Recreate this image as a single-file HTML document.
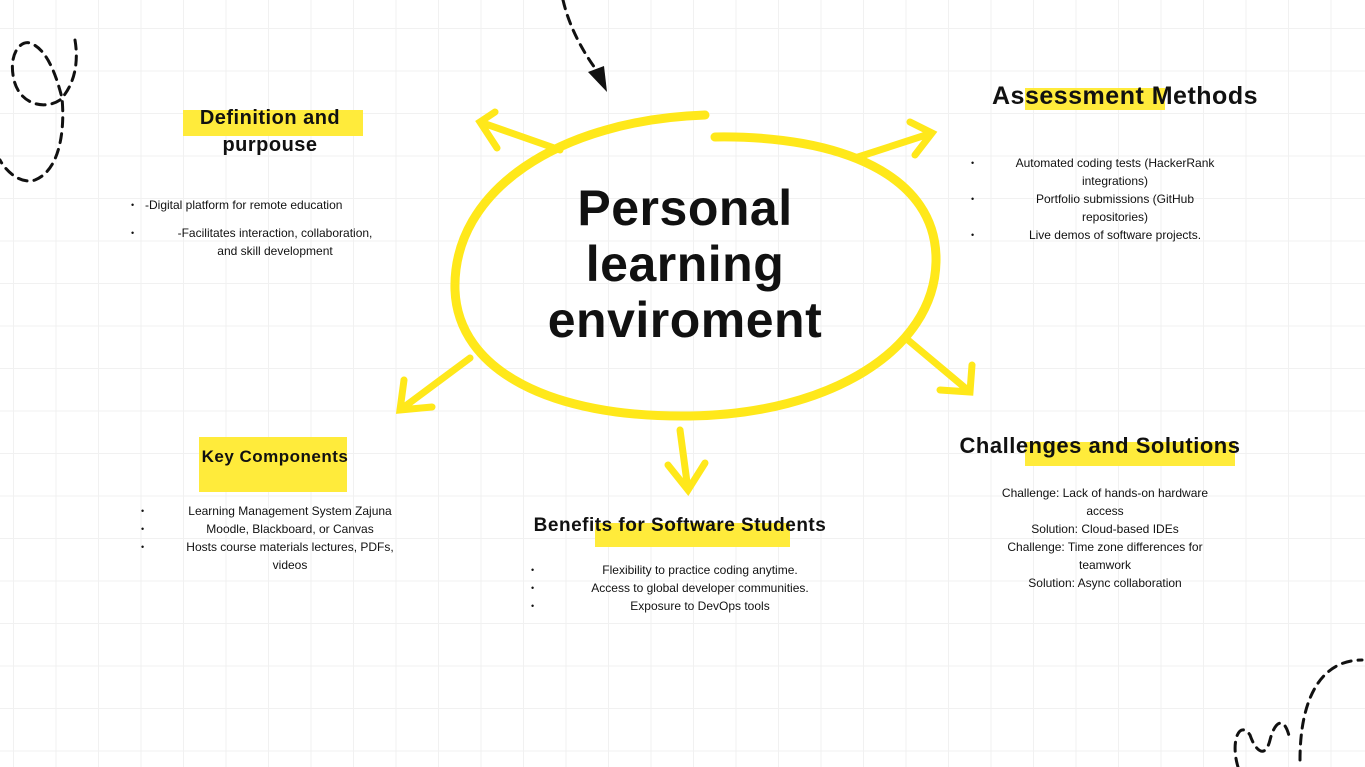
<!DOCTYPE html>
<html><head><meta charset="utf-8"><style>
html,body{margin:0;padding:0}
body{width:1365px;height:767px;position:relative;overflow:hidden;background:#fff;
background-image:linear-gradient(#f1f1f1 1px,transparent 1px),linear-gradient(90deg,#f1f1f1 1px,transparent 1px);
background-size:42.5px 42.5px;background-position:0 28px, 13px 0;
font-family:"Liberation Sans",sans-serif;color:#111}
.t{position:absolute;text-align:center;font-weight:bold;letter-spacing:0.5px}
.hl{position:absolute;background:#ffeb3b}
.s{position:absolute;font-size:12px;line-height:18px;text-align:center}
ul{margin:0;padding:0;list-style:none}
li{position:relative}
li:before{content:"•";position:absolute;left:-14px;font-size:9px}
</style></head><body>
<svg width="1365" height="767" style="position:absolute;left:0;top:0">
<g fill="none" stroke="#111" stroke-width="3" stroke-dasharray="9 7" stroke-linecap="round">
<path d="M75 40 C80 70 70 90 60 100 C45 110 20 105 14 80 C8 55 20 40 30 43 C45 48 55 70 62 98 C65 130 60 170 35 180 C20 185 5 170 0 160"/>
<path d="M563 0 C570 30 585 55 600 75"/>
<path d="M1238 767 C1230 740 1240 720 1250 735 C1255 750 1265 760 1270 740 C1275 720 1285 715 1290 740 M1300 760 C1300 700 1320 660 1362 660"/>
</g>
<path d="M588 72 L607 92 L604 66" fill="#111"/>
<g fill="none" stroke="#ffe81a" stroke-linecap="round" stroke-width="7">
<path d="M560 150 L480 122 M495 112 L480 122 L497 148"/>
<path d="M855 158 L932 133 M910 122 L932 133 L915 155"/>
<path d="M470 358 L400 410 M404 380 L400 410 L432 407"/>
<path d="M908 340 L970 392 M940 390 L970 392 L972 365"/>
<path d="M680 430 L688 490 M668 465 L688 490 L705 463"/>
<path d="M705 115 C560 120 452 190 455 290 C458 370 550 418 690 416 C830 414 934 350 936 262 C938 175 840 135 715 137" stroke-width="9"/>
</g>
</svg>
<div class="t" style="left:470px;top:180px;width:430px;font-size:50px;line-height:56px;font-weight:bold">Personal<br>learning<br>enviroment</div>

<div class="hl" style="left:183px;top:110px;width:180px;height:26px"></div>
<div class="t" style="left:170px;top:105px;width:200px;font-size:20px;line-height:27px">Definition and<br>purpouse</div>
<div class="s" style="left:145px;top:196px;width:260px;text-align:left"><ul><li>-Digital platform for remote education</li><li style="margin-top:10px;text-align:center">-Facilitates interaction, collaboration,<br>and skill development</li></ul></div>

<div class="hl" style="left:1025px;top:88px;width:140px;height:22px"></div>
<div class="t" style="left:960px;top:82px;width:330px;font-size:25px">Assessment Methods</div>
<div class="s" style="left:985px;top:154px;width:260px"><ul><li>Automated coding tests (HackerRank<br>integrations)</li><li>Portfolio submissions (GitHub<br>repositories)</li><li>Live demos of software projects.</li></ul></div>

<div class="hl" style="left:199px;top:437px;width:148px;height:55px"></div>
<div class="t" style="left:180px;top:447px;width:190px;font-size:17px">Key Components</div>
<div class="s" style="left:155px;top:502px;width:270px"><ul><li>Learning Management System Zajuna</li><li>Moodle, Blackboard, or Canvas</li><li>Hosts course materials lectures, PDFs,<br>videos</li></ul></div>

<div class="hl" style="left:595px;top:523px;width:195px;height:24px"></div>
<div class="t" style="left:505px;top:515px;width:350px;font-size:19px">Benefits for Software Students</div>
<div class="s" style="left:545px;top:561px;width:310px"><ul><li>Flexibility to practice coding anytime.</li><li>Access to global developer communities.</li><li>Exposure to DevOps tools</li></ul></div>

<div class="hl" style="left:1025px;top:442px;width:210px;height:24px"></div>
<div class="t" style="left:935px;top:433px;width:330px;font-size:22px">Challenges and Solutions</div>
<div class="s" style="left:970px;top:484px;width:270px">Challenge: Lack of hands-on hardware<br>access<br>Solution: Cloud-based IDEs<br>Challenge: Time zone differences for<br>teamwork<br>Solution: Async collaboration</div>
</body></html>
